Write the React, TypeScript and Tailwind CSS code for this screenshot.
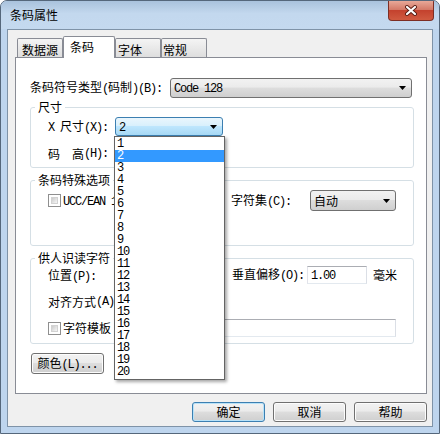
import React from "react"

const grad = "bg-[linear-gradient(#f2f2f2,#ebebeb_45%,#dddddd_50%,#cfcfcf)]"
const gradFocus = "bg-[linear-gradient(#eaf6fd,#d9f0fc_45%,#bee6fd_50%,#a7d9f5)]"

// mixes CJK (Noto) with half-width latin (mono squeezed to 6px)
function T({ s }: { s: string }) {
  const parts = s.split(/([\u3000-\u9fff\uff00-\uffef]+)/)
  return (
    <>
      {parts.map((p, i) =>
        p === "" ? null : /[\u3000-\u9fff\uff00-\uffef]/.test(p) ? (
          <span key={i}>{p}</span>
        ) : (
          <span key={i} className="whitespace-pre font-['Liberation_Mono','Noto_Sans_CJK_SC',monospace] tracking-[-1.2px]">
            {p}
          </span>
        )
      )}
    </>
  )
}

function Arrow() {
  return (
    <svg width="7" height="4" viewBox="0 0 7 4" className="shrink-0">
      <path d="M0 0H7L3.5 4Z" fill="#000" />
    </svg>
  )
}

function Combo({ w, h, text, focused }: { w: string; h: string; text: string; focused?: boolean }) {
  return (
    <div
      className={`${w} ${h} flex items-center justify-between rounded-[3px] border pl-[3px] pr-[5px] ${
        focused ? `border-[#3c7fb1] ${gradFocus}` : `border-[#707070] ${grad}`
      }`}
    >
      <span className="leading-[14px]">
        <T s={text} />
      </span>
      <Arrow />
    </div>
  )
}

function Check() {
  return (
    <div className="w-[13px] h-[13px] shrink-0 border border-[#8f8f8f] bg-white p-[2px]">
      <div className="w-full h-full bg-[linear-gradient(135deg,#cbcbcb,#f6f6f6)] border border-[#d2d2d2]" />
    </div>
  )
}

function Input({ w, text }: { w: string; text?: string }) {
  return (
    <div className={`${w} h-[18px] flex items-center border border-[#abadb3] border-l-[#e2e3ea] border-r-[#dbdfe6] border-b-[#e3e9ef] bg-white pl-[3px]`}>
      {text && (
        <span className="leading-[14px]">
          <T s={text} />
        </span>
      )}
    </div>
  )
}

function Button({ label, def, w = "w-[73px]", h = "h-[20px]" }: { label: string; def?: boolean; w?: string; h?: string }) {
  return (
    <div
      className={`${w} ${h} flex items-center justify-center rounded-[3px] border ${grad} ${
        def ? "border-[#3c7fb1] shadow-[inset_0_0_0_1px_#b8e2f8]" : "border-[#707070] shadow-[inset_0_0_0_1px_#fcfcfc]"
      }`}
    >
      <span className="leading-[14px]">
        <T s={label} />
      </span>
    </div>
  )
}

function Tab({ label, w, pl, selected }: { label: string; w: string; pl: string; selected?: boolean }) {
  if (selected)
    return (
      <div className={`${w} ${pl} relative z-10 h-[22px] -mb-px rounded-t-[2px] border border-b-0 border-[#898c95] bg-white pt-[3px] leading-[14px]`}>
        {label}
      </div>
    )
  return (
    <div className={`${w} ${pl} h-[19px] rounded-t-[2px] border border-b-0 border-[#898c95] bg-[linear-gradient(#f4f4f4,#e9e9e9_50%,#dedede)] pt-[4px] leading-[14px]`}>
      {label}
    </div>
  )
}

const sizes = Array.from({ length: 20 }, (_, i) => String(i + 1))

export default function App() {
  return (
    <div className="w-[440px] h-[434px] flex flex-col border border-[#55677b] rounded-t-[7px] bg-[#bed5ee] font-['Noto_Sans_CJK_SC',sans-serif] text-[12px] text-black overflow-hidden">
      {/* title bar */}
      <div className="h-[28px] shrink-0 flex items-start justify-between pl-[9px] pr-[5px] bg-[linear-gradient(#a9c2dc,#c3d8ee_45%,#c4d9ef)]">
        <span className="mt-[7px] leading-[14px]">条码属性</span>
        <div className="w-[46px] h-[20px] rounded-b-[4px] border border-t-0 border-[#7d2e24] bg-[linear-gradient(#e8a898,#d47a68_45%,#c4422e_50%,#d05a40)] flex items-center justify-center">
          <svg width="14" height="11" viewBox="0 0 14 11">
            <path d="M3 2L11 9M11 2L3 9" stroke="#5a1d14" strokeWidth="4" strokeLinecap="round" />
            <path d="M3 2L11 9M11 2L3 9" stroke="#fff" strokeWidth="2.2" strokeLinecap="round" />
          </svg>
        </div>
      </div>

      {/* client area */}
      <div className="mx-[6px] h-[398px] shrink-0 border border-[#7f93a8] bg-[#f0f0f0] flex flex-col">
        <div className="h-[21px] mt-[6px] ml-[9px] flex items-end">
          <Tab label="数据源" w="w-[46px]" pl="pl-[4px]" />
          <Tab label="条码" w="w-[52px]" pl="pl-[6px]" selected />
          <Tab label="字体" w="w-[46px]" pl="pl-[2px]" />
          <Tab label="常规" w="w-[46px]" pl="pl-[1px]" />
        </div>

        {/* tab page */}
        <div className="relative ml-[7px] w-[412px] h-[337px] border border-[#898c95] bg-white flex flex-col pl-[14px]">
          <div className="mt-[20px] h-[20px] flex items-center">
            <span className="w-[140px] leading-[14px]">
              <T s="条码符号类型(码制)(B):" />
            </span>
            <Combo w="w-[242px]" h="h-[20px]" text="Code 128" />
          </div>

          <fieldset className="mt-[2px] w-[384px] h-[68px] border border-[#d5dfe5] rounded-[3px]">
            <legend className="ml-[4px] px-[3px] leading-[14px]">尺寸</legend>
            <div className="pl-[17px] flex flex-col">
              <div className="mt-[3px] h-[19px] flex items-center">
                <span className="w-[67px] leading-[14px]">
                  <T s="X 尺寸(X):" />
                </span>
                <Combo w="w-[108px]" h="h-[19px]" text="2" focused />
              </div>
              <div className="mt-[8px] h-[19px] flex items-center leading-[14px]">
                <span>码</span>
                <span className="w-[12px]" />
                <T s="高(H):" />
              </div>
            </div>
          </fieldset>

          <fieldset className="mt-[5px] w-[384px] h-[73px] border border-[#d5dfe5] rounded-[3px]">
            <legend className="ml-[4px] px-[3px] leading-[14px]">条码特殊选项</legend>
            <div className="pl-[17px] mt-[3px] h-[21px] flex items-center">
              <div className="w-[183px] flex items-center gap-[2px]">
                <Check />
                <span className="leading-[14px]">
                  <T s="UCC/EAN 128" />
                </span>
              </div>
              <span className="w-[79px] leading-[14px]">
                <T s="字符集(C):" />
              </span>
              <Combo w="w-[86px]" h="h-[21px]" text="自动" />
            </div>
          </fieldset>

          <fieldset className="mt-[5px] w-[384px] h-[93px] border border-[#d5dfe5] rounded-[3px]">
            <legend className="ml-[4px] px-[3px] leading-[14px]">供人识读字符</legend>
            <div className="pl-[17px] flex flex-col">
              <div className="mt-[1px] h-[18px] flex items-center">
                <span className="w-[184px] leading-[14px] mt-[2px]">
                  <T s="位置(P):" />
                </span>
                <span className="w-[75px] leading-[14px]">
                  <T s="垂直偏移(O):" />
                </span>
                <Input w="w-[60px]" text="1.00" />
                <span className="ml-[6px] leading-[14px]">毫米</span>
              </div>
              <div className="mt-[9px] h-[18px] flex items-center leading-[14px]">
                <T s="对齐方式(A):" />
              </div>
              <div className="mt-[8px] h-[18px] flex items-center">
                <div className="w-[92px] flex items-center gap-[2px]">
                  <Check />
                  <span className="leading-[14px]">字符模板</span>
                </div>
                <Input w="w-[256px]" />
              </div>
            </div>
          </fieldset>

          <div className="mt-[9px] ml-[1px]">
            <Button label="颜色(L)..." h="h-[21px]" />
          </div>

          {/* open drop-down of X 尺寸 */}
          <div className="absolute left-[98px] top-[78px] z-20 w-[111px] border border-[#646464] bg-white py-px shadow-[2px_2px_3px_rgba(0,0,0,0.35)]">
            {sizes.map((n) => (
              <div
                key={n}
                className={`h-[12px] pl-[2px] leading-[12px] font-['Liberation_Mono',monospace] tracking-[-1.2px] ${
                  n === "2" ? "bg-[#3399ff] text-white" : ""
                }`}
              >
                {n}
              </div>
            ))}
          </div>
        </div>

        <div className="mt-[8px] pr-[5px] flex justify-end gap-[8px]">
          <Button label="确定" def />
          <Button label="取消" />
          <Button label="帮助" />
        </div>
      </div>
    </div>
  )
}
